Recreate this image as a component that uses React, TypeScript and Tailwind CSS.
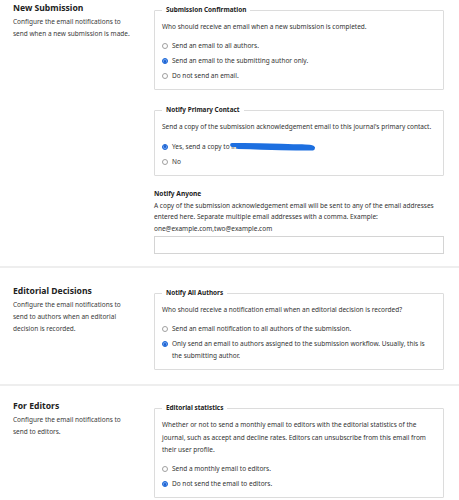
import React from "react";

const font = { fontFamily: "'Noto Sans', 'Open Sans', sans-serif" };

function Radio({ checked, children }: { checked?: boolean; children: React.ReactNode }) {
  return (
    <div className="flex items-start gap-[4px]">
      <span className="mt-[3px] shrink-0">
        {checked ? (
          <span className="flex h-[6px] w-[6px] items-center justify-center rounded-full border border-[#1a66d6] bg-[#6fa3ee]">
            <span className="h-[2.5px] w-[2.5px] rounded-full bg-[#1a5fd0]" />
          </span>
        ) : (
          <span className="block h-[6px] w-[6px] rounded-full border border-[#a0a0a0] bg-white" />
        )}
      </span>
      <span className="leading-[12px]">{children}</span>
    </div>
  );
}

function Fieldset({ legend, text, children }: { legend: string; text: React.ReactNode; children: React.ReactNode }) {
  return (
    <fieldset className="rounded-[1px] border border-[#dcdcdc] px-[7px] pb-[7px]">
      <legend className="px-[4px] text-[6.4px] font-bold leading-[10px] text-[#222]">{legend}</legend>
      <p className="mt-[6px] leading-[12.3px]">{text}</p>
      <div className="mt-[7px] flex flex-col gap-[3px]">{children}</div>
    </fieldset>
  );
}

function Section({
  title,
  desc,
  children,
  className,
}: {
  title: string;
  desc: string;
  children: React.ReactNode;
  className: string;
}) {
  return (
    <div className={"flex pl-[13px] pr-[15px] " + className}>
      <div className="w-[141px] shrink-0 pr-[20px]">
        <h2 className="-mt-[3px] text-[8.6px] font-bold leading-[12px] text-[#222]">{title}</h2>
        <p className="mt-[2px] leading-[12px] text-[#3a3a3a]">{desc}</p>
      </div>
      <div className="flex-1">{children}</div>
    </div>
  );
}

function Separator() {
  return <div className="h-[2px] w-full bg-[#eeeeee]" />;
}

export default function App() {
  return (
    <div className="h-[500px] w-[459px] overflow-hidden bg-white text-[6.5px] text-[#333]" style={font}>
      <Section
        title="New Submission"
        desc="Configure the email notifications to send when a new submission is made."
        className="pt-[5px] pb-[12px]"
      >
        <Fieldset legend="Submission Confirmation" text="Who should receive an email when a new submission is completed.">
          <Radio>Send an email to all authors.</Radio>
          <Radio checked>Send an email to the submitting author only.</Radio>
          <Radio>Do not send an email.</Radio>
        </Fieldset>
        <div className="mt-[15px]">
          <Fieldset
            legend="Notify Primary Contact"
            text="Send a copy of the submission acknowledgement email to this journal's primary contact."
          >
            <Radio checked>
              Yes, send a copy to{" "}
              <span className="relative inline-block w-[80px] align-top">
                <span className="text-[#333]">in</span>
                <svg
                  className="absolute left-[-1px] top-[1px]"
                  width="88"
                  height="10"
                  viewBox="0 0 88 10"
                  fill="none"
                >
                  <path
                    d="M2 3 C 20 2.2, 45 3.5, 72 4.2 C 80 4.5, 84 5, 83 6.5 C 72 7, 40 6, 8 5"
                    stroke="#1d6fe0"
                    strokeWidth="3.8"
                    strokeLinecap="round"
                    strokeLinejoin="round"
                  />
                </svg>
              </span>
            </Radio>
            <Radio>No</Radio>
          </Fieldset>
        </div>
        <div className="mt-[12px]">
          <h3 className="text-[6.6px] font-bold leading-[12px] text-[#222]">Notify Anyone</h3>
          <p className="leading-[11.5px]">
            A copy of the submission acknowledgement email will be sent to any of the email addresses entered here.
            Separate multiple email addresses with a comma. Example: one@example.com,two@example.com
          </p>
          <div className="mt-[2px] h-[18px] w-full border border-[#d4d4d4] bg-white" />
        </div>
      </Section>
      <Separator />
      <Section
        title="Editorial Decisions"
        desc="Configure the email notifications to send to authors when an editorial decision is recorded."
        className="pt-[20px] pb-[14px]"
      >
        <Fieldset
          legend="Notify All Authors"
          text="Who should receive a notification email when an editorial decision is recorded?"
        >
          <Radio>Send an email notification to all authors of the submission.</Radio>
          <Radio checked>
            Only send an email to authors assigned to the submission workflow. Usually, this is the submitting author.
          </Radio>
        </Fieldset>
      </Section>
      <Separator />
      <Section
        title="For Editors"
        desc="Configure the email notifications to send to editors."
        className="pt-[17px] pb-[14px]"
      >
        <Fieldset
          legend="Editorial statistics"
          text="Whether or not to send a monthly email to editors with the editorial statistics of the journal, such as accept and decline rates. Editors can unsubscribe from this email from their user profile."
        >
          <Radio>Send a monthly email to editors.</Radio>
          <Radio checked>Do not send the email to editors.</Radio>
        </Fieldset>
      </Section>
    </div>
  );
}
